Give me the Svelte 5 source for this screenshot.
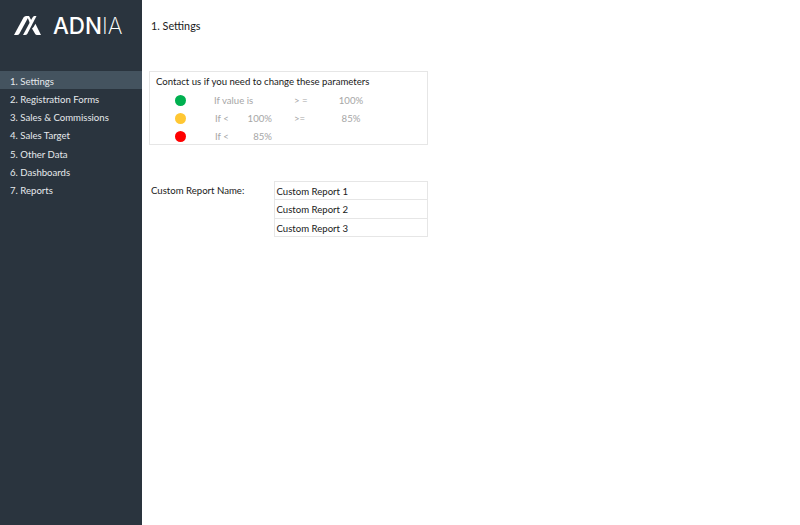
<script>
	const menu = [
		'1. Settings',
		'2. Registration Forms',
		'3. Sales & Commissions',
		'4. Sales Target',
		'5. Other Data',
		'6. Dashboards',
		'7. Reports'
	];
	const reports = ['Custom Report 1', 'Custom Report 2', 'Custom Report 3'];
</script>

<div class="page">
	<aside class="sidebar">
		<div class="logo">
			<svg width="28" height="19" viewBox="0 0 28 19">
				<path d="M0 19 L9.5 1.6 Q10.4 0 12 0 H15 L5.5 17.4 Q4.6 19 3 19 Z" fill="#fff" />
				<path d="M13 0 H15 L18 5.6 L16.4 8.6 Z" fill="#fff" />
				<path d="M9 19 L17.5 3.2 Q19 .6 20 0 H22.5 L13.5 17.4 Q12.6 19 11 19 Z" fill="#fff" />
				<path d="M19.6 11 L21.4 7.8 L27 19 H23 Q21.8 19 21.2 18 L18 12.6 Z" fill="#fff" />
			</svg>
			<span class="brand">ADN<span class="thin">IA</span></span>
		</div>
		<nav class="menu">
			{#each menu as item, i}
				<div class="item {i === 0 ? 'active' : ''}">{item}</div>
			{/each}
		</nav>
	</aside>

	<main class="content">
		<h1>1. Settings</h1>

		<section class="params">
			<div class="params-title">Contact us if you need to change these parameters</div>
			<div class="param-row">
				<span class="dot green"></span>
				<span class="c1">If value is</span>
				<span class="c2"></span>
				<span class="c3">&gt; =</span>
				<span class="c4">100%</span>
			</div>
			<div class="param-row">
				<span class="dot amber"></span>
				<span class="c1 shift">If &lt;</span>
				<span class="c2">100%</span>
				<span class="c3">&gt;=</span>
				<span class="c4">85%</span>
			</div>
			<div class="param-row">
				<span class="dot red"></span>
				<span class="c1 shift">If &lt;</span>
				<span class="c2">85%</span>
			</div>
		</section>

		<section class="reports">
			<div class="reports-label">Custom Report Name:</div>
			<div class="reports-list">
				{#each reports as r}
					<div class="report">{r}</div>
				{/each}
			</div>
		</section>
	</main>
</div>

<style>
	:global(body) {
		margin: 0;
		background: #fff;
	}

	.page {
		display: flex;
		height: 525px;
		width: 800px;
		overflow: hidden;
		font-family: 'Lato', 'Open Sans', sans-serif;
		font-size: 9.6px;
		color: #1a1a1a;
	}

	.sidebar {
		width: 142px;
		flex-shrink: 0;
		background: #2a343e;
		color: #fff;
	}

	.logo {
		height: 71px;
		box-sizing: border-box;
		padding: 16px 0 0 14px;
		display: flex;
		align-items: flex-start;
		gap: 11px;
	}

	.brand {
		font-family: 'Inter', 'Liberation Sans', sans-serif;
		font-size: 22.4px;
		line-height: 19px;
		font-weight: 500;
	}

	.thin {
		font-weight: 200;
	}

	.item {
		height: 18.3px;
		box-sizing: border-box;
		padding: 1.5px 0 0 10px;
		line-height: 18.3px;
		color: #e6e9ec;
	}

	.item.active {
		background: #44535f;
	}

	.content {
		flex: 1;
		padding-left: 7px;
	}

	h1 {
		margin: 0 0 0 2px;
		padding-top: 19px;
		height: 52px;
		font-size: 10.8px;
		line-height: 14px;
		font-weight: 400;
	}

	.params {
		width: 279px;
		height: 74px;
		box-sizing: border-box;
		border: 1px solid #e6e6e6;
		padding: 1px 0 0 6px;
	}

	.params-title {
		height: 18px;
		line-height: 18px;
	}

	.param-row {
		display: flex;
		align-items: center;
		height: 18px;
		color: #a6a6a6;
	}

	.dot {
		width: 11px;
		height: 11px;
		border-radius: 50%;
		margin-left: 19px;
		flex-shrink: 0;
	}

	.green { background: #00b050; }
	.amber { background: #ffc733; }
	.red { background: #ff0000; }

	.c1 { width: 29px; margin-left: 28px; white-space: nowrap; }
	.c1.shift { width: 28px; margin-left: 29px; }
	.c2 { width: 29px; text-align: right; }
	.c3 { margin-left: 22px; width: 36px; }
	.c4 { width: 42px; text-align: center; }

	.reports {
		display: flex;
		margin-top: 36px;
	}

	.reports-label {
		width: 125px;
		padding: 4px 0 0 2px;
		box-sizing: border-box;
	}

	.reports-list {
		width: 154px;
		height: 56px;
		border: 1px solid #e6e6e6;
		box-sizing: border-box;
	}

	.report {
		height: 18.3px;
		line-height: 19px;
		padding-left: 1.5px;
		border-bottom: 1px solid #e6e6e6;
		box-sizing: border-box;
	}

	.report:last-child {
		border-bottom: none;
	}
</style>
